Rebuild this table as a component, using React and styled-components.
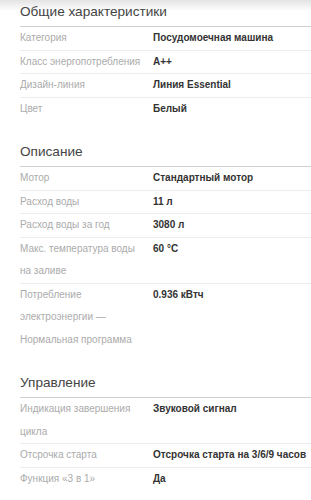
import React from 'react';
import styled, { createGlobalStyle } from 'styled-components';

const GlobalStyle = createGlobalStyle`
  html, body {
    margin: 0;
    padding: 0;
  }
  body {
    background: linear-gradient(#e3e3e3 0, #ffffff 11px) no-repeat, #ffffff;
    font-family: "Liberation Sans", Arial, sans-serif;
    color: #333;
  }
`;

const Page = styled.div`
  padding: 0 0 0 20px;
`;

const Section = styled.section`
  margin-bottom: 20px;
`;

const SectionTitle = styled.h3`
  margin: 0;
  height: 26px;
  line-height: 24px;
  font-size: 13.6px;
  font-weight: normal;
  color: #444;
  border-bottom: 1px solid #cfcfcf;
`;

const SpecList = styled.dl`
  margin: 0;
`;

const SpecRow = styled.div`
  display: grid;
  grid-template-columns: 133px 1fr;
  border-bottom: 1px solid #ececec;
  font-size: 10px;
  line-height: 22.5px;

  &:last-child {
    border-bottom: none;
  }
`;

const SpecLabel = styled.dt`
  margin: 0;
  padding-right: 8px;
  color: #ababab;
`;

const SpecValue = styled.dd`
  margin: 0;
  font-weight: bold;
  color: #333;
  white-space: nowrap;
`;

const sections = [
  {
    title: 'Общие характеристики',
    specs: [
      ['Категория', 'Посудомоечная машина'],
      ['Класс энергопотребления', 'A++'],
      ['Дизайн-линия', 'Линия Essential'],
      ['Цвет', 'Белый']
    ]
  },
  {
    title: 'Описание',
    specs: [
      ['Мотор', 'Стандартный мотор'],
      ['Расход воды', '11 л'],
      ['Расход воды за год', '3080 л'],
      ['Макс. температура воды на заливе', '60 °C'],
      ['Потребление электроэнергии — Нормальная программа', '0.936 кВтч']
    ]
  },
  {
    title: 'Управление',
    specs: [
      ['Индикация завершения цикла', 'Звуковой сигнал'],
      ['Отсрочка старта', 'Отсрочка старта на 3/6/9 часов'],
      ['Функция «3 в 1»', 'Да']
    ]
  }
];

export default function App() {
  return (
    <>
      <GlobalStyle />
      <Page>
        {sections.map((section) => (
          <Section key={section.title}>
            <SectionTitle>{section.title}</SectionTitle>
            <SpecList>
              {section.specs.map(([label, value]) => (
                <SpecRow key={label}>
                  <SpecLabel>{label}</SpecLabel>
                  <SpecValue>{value}</SpecValue>
                </SpecRow>
              ))}
            </SpecList>
          </Section>
        ))}
      </Page>
    </>
  );
}
